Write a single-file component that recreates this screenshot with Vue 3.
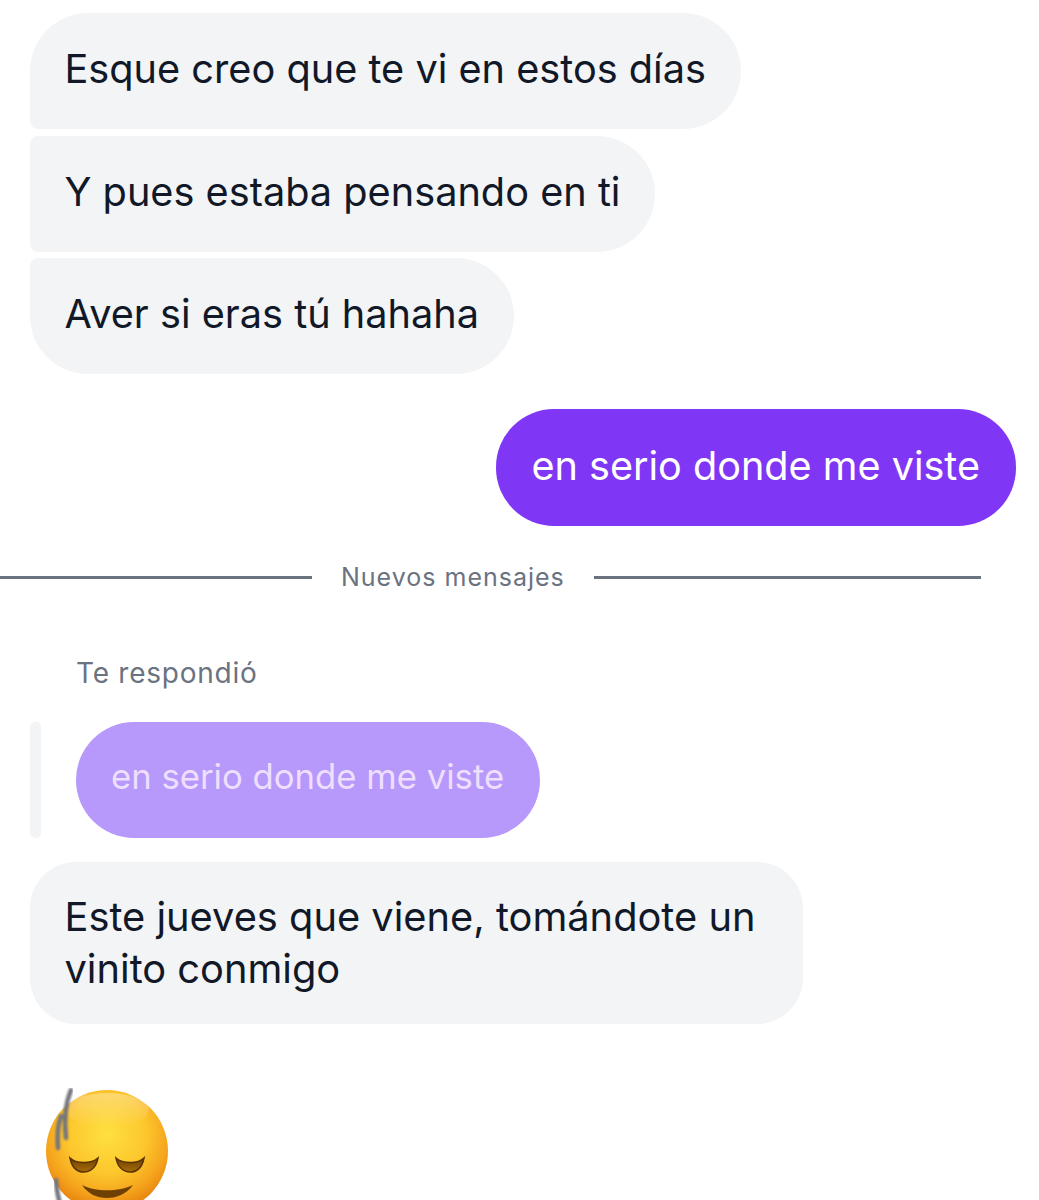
<script setup>
const incoming = [
  { text: 'Esque creo que te vi en estos días', cls: 'first' },
  { text: 'Y pues estaba pensando en ti', cls: 'middle' },
  { text: 'Aver si eras tú hahaha', cls: 'last' }
]
</script>

<template>
  <div class="chat">
    <div class="group">
      <div v-for="m in incoming" :key="m.text" class="bubble in" :class="m.cls">{{ m.text }}</div>
    </div>

    <div class="row-out">
      <div class="bubble out">en serio donde me viste</div>
    </div>

    <div class="divider">
      <span class="line short"></span>
      <span class="divider-text">Nuevos mensajes</span>
      <span class="line"></span>
    </div>

    <div class="reply-label">Te respondió</div>
    <div class="reply">
      <span class="reply-bar"></span>
      <div class="bubble quoted">en serio donde me viste</div>
    </div>

    <div class="bubble in wide">Este jueves que viene, tomándote un vinito conmigo</div>

    <svg class="emoji" width="136" height="124" viewBox="0 0 136 124">
      <defs>
        <radialGradient id="face" cx="50%" cy="36%" r="60%">
          <stop offset="0" stop-color="#ffe040" />
          <stop offset="0.55" stop-color="#fcc62c" />
          <stop offset="0.85" stop-color="#f5a21c" />
          <stop offset="1" stop-color="#e98a12" />
        </radialGradient>
        <linearGradient id="shine" x1="0" y1="0" x2="0" y2="1">
          <stop offset="0" stop-color="#fff" stop-opacity="0.32" />
          <stop offset="1" stop-color="#fff" stop-opacity="0" />
        </linearGradient>
        <linearGradient id="eye" x1="0" y1="0" x2="0" y2="1">
          <stop offset="0" stop-color="#6e4102" />
          <stop offset="1" stop-color="#a86c08" />
        </linearGradient>
        <filter id="soft"><feGaussianBlur stdDeviation="0.9" /></filter>
      </defs>
      <circle cx="68" cy="63" r="61" fill="url(#face)" />
      <ellipse cx="68" cy="22" rx="42" ry="17" fill="url(#shine)" />
      <path d="M31 70 C37 76 52 76 59 70 C57 80 51 84 45 84 C38 84 33 80 31 70 Z" fill="url(#eye)" stroke="#5a3300" stroke-width="1.5" />
      <path d="M77 70 C84 76 99 76 105 70 C103 80 98 84 91 84 C85 84 79 80 77 70 Z" fill="url(#eye)" stroke="#5a3300" stroke-width="1.5" />
      <path d="M43 97 C56 104 80 104 94 97 C87 107 76 110 68 110 C58 110 49 106 43 97 Z" fill="#6f4003" />
      <g fill="none" stroke="#73767e" stroke-width="4.5" stroke-linecap="round" filter="url(#soft)">
        <path d="M22 28 C19 36 18 48 19 60" />
        <path d="M32 2 C27 14 25 32 27 50" />
        <path d="M17 92 C17 102 20 112 23 124" />
      </g>
    </svg>
  </div>
</template>

<style scoped>
.chat {
  height: 1187px;
  padding-top: 13px;
  overflow: hidden;
  background: #fff;
  font-family: Inter, "Noto Sans", sans-serif;
  -webkit-font-smoothing: antialiased;
}

.group {
  display: flex;
  flex-direction: column;
  align-items: flex-start;
  gap: 6.5px;
  margin-left: 30px;
}

.bubble {
  box-sizing: border-box;
  padding: 30px 35px 34px 34.5px;
  border-radius: 58px;
  font-size: 39.7px;
  line-height: 52px;
  white-space: nowrap;
}

.in {
  background: #f3f4f6;
  color: #111827;
}

.first {
  border-bottom-left-radius: 8px;
}

.middle {
  border-top-left-radius: 8px;
  border-bottom-left-radius: 8px;
}

.last {
  border-top-left-radius: 8px;
}

.row-out {
  display: flex;
  justify-content: flex-end;
  margin: 35px 23px 0 0;
}

.out {
  padding: 30.5px 36px 34px 35px;
  background: #7f37f5;
  color: #fff;
  font-size: 39.6px;
}

.divider {
  display: flex;
  align-items: center;
  gap: 29px;
  margin: 35px 58px 0 0;
}

.line {
  flex: 1;
  height: 3px;
  margin-top: 2px;
  background: #6b7280;
}

.line.short {
  flex: none;
  width: 312px;
}

.divider-text {
  font-size: 25px;
  line-height: 32px;
  letter-spacing: 1px;
  color: #6b7280;
}

.reply-label {
  margin: 63px 0 0 76px;
  font-size: 28px;
  line-height: 34px;
  letter-spacing: 0.75px;
  color: #6b7280;
}

.reply {
  display: flex;
  align-items: stretch;
  gap: 35px;
  margin: 32px 0 0 30px;
}

.reply-bar {
  width: 11px;
  border-radius: 5px;
  background: #f3f4f6;
}

.quoted {
  padding: 28px 36px 36px 35px;
  background: #b699fb;
  color: #eedffd;
  font-size: 34.7px;
}

.wide {
  width: 773px;
  margin: 24px 0 0 30px;
  padding: 29px 35px 28px 34.5px;
  border-radius: 46px;
  font-size: 39.8px;
  line-height: 52.5px;
  white-space: normal;
}

.emoji {
  display: block;
  margin: 64px 0 0 39px;
}
</style>

<style>
html, body {
  margin: 0;
  background: #fff;
  overflow: hidden;
}
</style>
